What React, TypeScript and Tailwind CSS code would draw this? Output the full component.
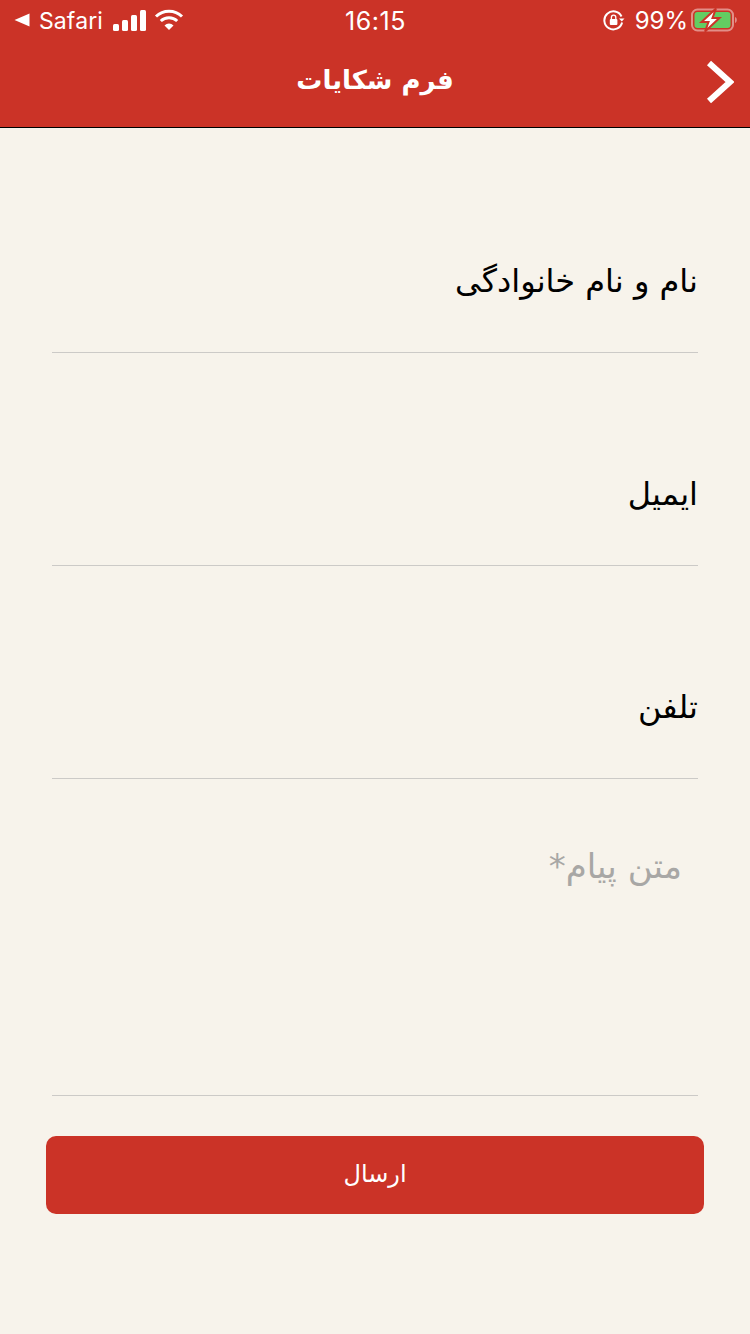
import React from 'react';

const fa = "font-['DejaVu_Sans',sans-serif]";

const fields = ['نام و نام خانوادگی', 'ایمیل', 'تلفن'];

const StatusBar = () => (
  <div className="h-10 flex items-center justify-between pl-[14px] pr-[13px] text-white font-['Inter',sans-serif]">
    <div className="flex-1 flex items-center">
      <svg width="16" height="14" viewBox="0 0 16 14" className="mr-[9px]">
        <path d="M15.5 0.5v13L0.5 7z" fill="#fff" />
      </svg>
      <span className="text-[23px] leading-none tracking-[0.1px] mr-[10px] mt-[2px]">Safari</span>
      <svg width="34" height="22" viewBox="0 0 34 22" className="mr-[8px]">
        <rect x="0" y="15" width="6" height="7" rx="1.5" fill="#fff" />
        <rect x="9" y="11" width="6" height="11" rx="1.5" fill="#fff" />
        <rect x="18" y="6" width="6" height="16" rx="1.5" fill="#fff" />
        <rect x="27" y="1" width="6" height="21" rx="1.5" fill="#fff" />
      </svg>
      <svg width="30" height="22" viewBox="0 0 30 22" className="-ml-[1px]">
        <path d="M2 7.5a18.5 18.5 0 0 1 26 0" fill="none" stroke="#fff" strokeWidth="3" />
        <path d="M6.8 12a12 12 0 0 1 16.4 0" fill="none" stroke="#fff" strokeWidth="3" />
        <path d="M15 21l-4.5-4.6a6.4 6.4 0 0 1 9 0z" fill="#fff" />
      </svg>
    </div>
    <span className="text-[25px] leading-none tracking-[0.6px] mt-[2px]">16:15</span>
    <div className="flex-1 flex items-center justify-end">
      <svg width="22" height="22" viewBox="0 0 22 22" className="mr-[10px]">
        <path d="M18.5 7.5a9 9 0 1 0 .6 6" fill="none" stroke="#fff" strokeWidth="2" />
        <path d="M16 9.5h5.5l-2.7 3z" fill="#fff" />
        <rect x="6.8" y="10" width="7.6" height="6" rx="1" fill="#fff" />
        <path d="M8.4 10V8.4a2.2 2.2 0 0 1 4.4 0V10" fill="none" stroke="#fff" strokeWidth="1.3" />
      </svg>
      <span className="text-[24px] leading-none mr-[3px] mt-[2px]">99%</span>
      <svg width="46" height="24" viewBox="0 0 46 24">
        <rect x="1" y="1.5" width="41" height="21" rx="5.5" fill="none" stroke="#fff" strokeOpacity="0.45" strokeWidth="2" />
        <rect x="3.5" y="4" width="36" height="16" rx="3" fill="#63cc62" />
        <path d="M44 9v6c1.3-.4 1.8-1.6 1.8-3s-.5-2.6-1.8-3z" fill="#fff" fillOpacity="0.45" />
        <path d="M25 0.5L10.5 14h7L14 23.5 28.5 10h-7z" fill="#fff" stroke="#cb3327" strokeWidth="2" />
      </svg>
    </div>
  </div>
);

const Field = ({ label }: { label: string }) => (
  <div className="h-[213px] flex items-end border-b border-[#cccac7] justify-end pb-[49px]">
    <span className={`text-[32px] leading-[44px] text-black ${fa}`} dir="rtl">{label}</span>
  </div>
);

export default function App() {
  return (
    <div className="w-[750px] h-[1334px] bg-[#f7f3eb] flex flex-col overflow-hidden">
      <header className="bg-[#cb3327] border-b border-black h-[128px] flex flex-col">
        <StatusBar />
        <div className="flex-1 relative flex items-center justify-center pb-[8px]">
          <h1 className={`text-[26px] font-bold text-white leading-none ${fa}`} dir="rtl">فرم شکایات</h1>
          <svg width="28" height="44" viewBox="0 0 28 44" className="absolute right-[16px] top-[20px]">
            <path d="M3 3l21 19L3 41" fill="none" stroke="#fff" strokeWidth="6" />
          </svg>
        </div>
      </header>

      <main className="flex-1 flex flex-col">
        <div className="mx-[52px] flex flex-col -mt-[1px] pt-[13px]">
          {fields.map((f) => (
            <Field key={f} label={f} />
          ))}
          <div className="h-[317px] border-b border-[#cccac7] pt-[65px] pr-[16px] text-right">
            <span className={`text-[34px] leading-[44px] text-[#a8a7a5] ${fa}`} dir="rtl">متن پیام*</span>
          </div>
        </div>
        <button className={`mx-[46px] mt-[40px] h-[78px] rounded-[10px] bg-[#cb3327] text-white text-[24px] pb-[2px] ${fa}`} dir="rtl">
          ارسال
        </button>
      </main>
    </div>
  );
}
